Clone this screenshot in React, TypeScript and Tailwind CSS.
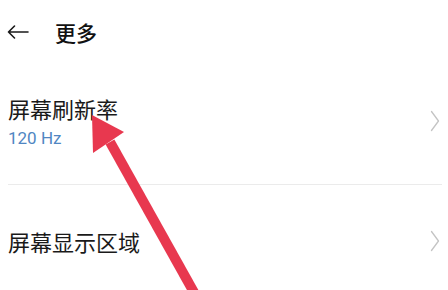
import React from "react";

function Chevron() {
  return (
    <svg width="10" height="22" viewBox="0 0 10 22" fill="none" className="shrink-0">
      <path d="M1.5 1.5 L8.5 11 L1.5 20.5" stroke="#c4c4c4" strokeWidth="1.3" strokeLinecap="round" strokeLinejoin="round" />
    </svg>
  );
}

export default function App() {
  return (
    <div
      className="relative w-[448px] h-[290px] overflow-hidden bg-white text-[#1a1a1a]"
      style={{ fontFamily: '"Noto Sans CJK SC", "Noto Sans", sans-serif' }}
    >
      <div className="flex h-16 items-center pl-[7px]">
        <svg width="22" height="14" viewBox="0 0 22 14" fill="none" className="shrink-0">
          <path d="M21 7 H1.5 M7.5 1 L1.5 7 L7.5 13" stroke="#1a1a1a" strokeWidth="1.6" strokeLinecap="round" strokeLinejoin="round" />
        </svg>
        <span className="ml-[26px] text-[21px] leading-[28px] font-medium text-[#111]">更多</span>
      </div>

      <div className="flex items-center justify-between pl-2 pr-[8px] pt-[29px] pb-[36px]">
        <div className="flex flex-col">
          <span className="text-[22px] leading-[30px]">屏幕刷新率</span>
          <span className="mt-[5px] text-[17px] leading-[20px] text-[#5086c2]" style={{ fontFamily: 'Roboto, "Noto Sans", sans-serif' }}>120 Hz</span>
        </div>
        <Chevron />
      </div>

      <div className="ml-2 mr-[6px] h-px bg-[#ebebeb]" />

      <div className="flex items-center justify-between pl-2 pr-[8px] pt-[41px]">
        <span className="text-[22px] leading-[30px]">屏幕显示区域</span>
        <Chevron />
      </div>

      <svg
        className="pointer-events-none absolute left-0 top-0"
        width="448"
        height="290"
        viewBox="0 0 448 290"
      >
        <line x1="110" y1="142" x2="196" y2="296" stroke="#e8384f" strokeWidth="10" />
        <polygon points="92,115 93,153 124,132" fill="#e8384f" />
      </svg>
    </div>
  );
}
